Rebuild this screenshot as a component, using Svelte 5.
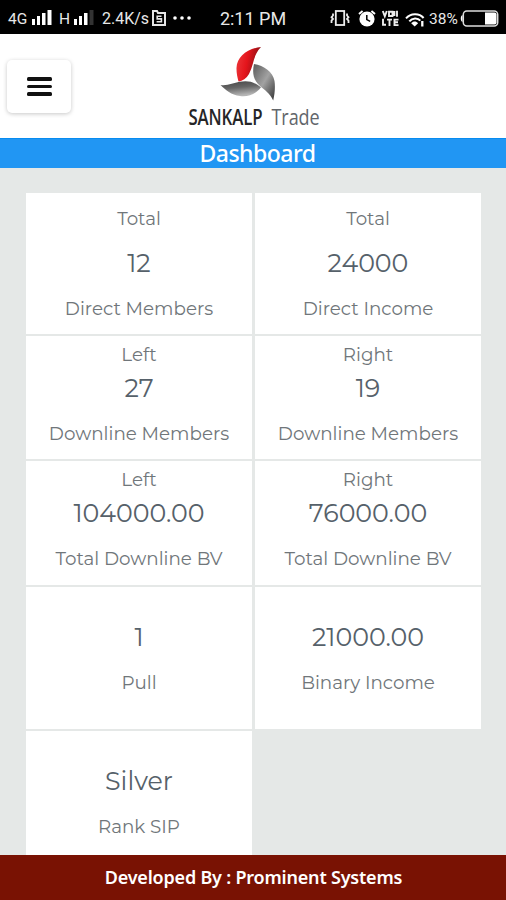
<script>
	const cards = [
		{ size: 'tall', top: 'Total', value: '12', label: 'Direct Members' },
		{ size: 'tall', top: 'Total', value: '24000', label: 'Direct Income' },
		{ size: 'short', top: 'Left', value: '27', label: 'Downline Members' },
		{ size: 'short', top: 'Right', value: '19', label: 'Downline Members' },
		{ size: 'short', top: 'Left', value: '104000.00', label: 'Total Downline BV' },
		{ size: 'short', top: 'Right', value: '76000.00', label: 'Total Downline BV' },
		{ size: 'plain', value: '1', label: 'Pull' },
		{ size: 'plain', value: '21000.00', label: 'Binary Income' },
		{ size: 'plain', value: 'Silver', label: 'Rank SIP' }
	];
</script>

{#snippet signal(weak)}
	<svg class="signal" width="22" height="16" viewBox="0 0 22 16" fill="#fff">
		<rect x="0" y="10" width="3" height="6" />
		<rect x="5" y="7" width="3" height="9" />
		<rect x="10" y="4" width="3.5" height="12" />
		<rect x="15.5" y="1" width="4" height="15" opacity={weak ? 0.2 : 1} />
	</svg>
{/snippet}

<div class="screen">
	<div class="status">
		<div class="left">
			<span class="net">4G</span>
			{@render signal(false)}
			<span class="net h">H</span>
			{@render signal(true)}
			<span class="speed">2.4K/s</span>
			<svg class="s-icon" width="14" height="16" viewBox="0 0 14 16" fill="none" stroke="#e5e5e5">
				<path d="M1 1h4l1 2h7v12H1z" stroke-width="2" />
				<path d="M9.5 6.2H5.2v2.7h4.2v2.9H4.6" stroke-width="1.6" />
			</svg>
			<svg width="18" height="16" viewBox="0 0 18 16" fill="#fff">
				<circle cx="2" cy="8" r="1.8" />
				<circle cx="9" cy="8" r="1.8" />
				<circle cx="16" cy="8" r="1.8" />
			</svg>
		</div>
		<div class="time">2:11 PM</div>
		<div class="right">
			<svg width="20" height="16" viewBox="0 0 20 16" fill="none" stroke="#eee" stroke-width="1.8">
				<rect x="5.8" y="1" width="8.4" height="14" />
				<path d="M3 3.5v2l-1.5 1.7L3 9l-1.5 1.5V13M17 3.5v2l1.5 1.7L17 9l1.5 1.5V13" />
			</svg>
			<svg class="alarm" width="18" height="17" viewBox="0 0 18 17">
				<circle cx="9" cy="9" r="7.6" fill="#fff" />
				<path d="M1 4l3.6-3M17 4l-3.6-3" stroke="#fff" stroke-width="2" />
				<path d="M8.8 5v4.6l3.4 1.7" fill="none" stroke="#000" stroke-width="1.5" />
			</svg>
			<svg class="volte" width="17" height="16" viewBox="0 0 17 16" fill="none" stroke="#eee" stroke-width="1.9">
				<path d="M.8 1l2 5.3 2-5.3M7 1.7h3.5V6H7zM15 .7v6M12.4 1v5M1 8.8v6h3M5 9.6h5M7.5 9.6V16M16.5 9.6h-4v5.5h4M12.5 12.3h3.5" />
			</svg>
			<svg class="wifi" width="20" height="14" viewBox="0 0 20 14" fill="none" stroke="#fff" stroke-width="2">
				<path d="M1 5.3C5.6.2 14-.3 18.6 5" />
				<path d="M4.3 8.3c3-3.7 8.5-3.8 11-.6" />
				<path d="M6.2 10.3c2-2.4 5-2.4 6.9 0l-3.4 3.3z" fill="#fff" stroke="none" />
				<path d="M17.3 8v5.5" stroke-width="2.3" />
			</svg>
			<span class="percent">38%</span>
			<svg width="39" height="17" viewBox="0 0 39 17">
				<rect x="3.3" y="1" width="34.4" height="15" rx="3.5" fill="none" stroke="#ddd" stroke-width="1.5" />
				<path d="M2.5 5C.2 5.4.2 11.6 2.5 12" fill="#fff" />
				<path d="M25 2.5h9.5q2 0 2 2v8q0 2-2 2H25z" fill="#fff" />
			</svg>
		</div>
	</div>

	<header>
		<button class="menu" aria-label="Menu">
			<span></span>
			<span></span>
			<span></span>
		</button>
		<svg class="logo" width="150" height="100" viewBox="0 0 150 100">
			<defs>
				<linearGradient id="red" x1="0" y1="0" x2="1" y2="0.25">
					<stop offset="0" stop-color="#ee3b3e" />
					<stop offset="0.5" stop-color="#e4141b" />
					<stop offset="1" stop-color="#861116" />
				</linearGradient>
				<linearGradient id="grey" x1="0" y1="0" x2="1" y2="1">
					<stop offset="0" stop-color="#5b5b5b" />
					<stop offset="0.5" stop-color="#a2a2a2" />
					<stop offset="1" stop-color="#333" />
				</linearGradient>
				<linearGradient id="dark" x1="0" y1="0" x2="0.3" y2="1">
					<stop offset="0" stop-color="#444" />
					<stop offset="0.5" stop-color="#666" />
					<stop offset="1" stop-color="#b5b5b5" />
				</linearGradient>
			</defs>
			<path d="M81 11C67 12.5 57 21 56.5 32c-.1 5 .8 9 2 13.5 4-.6 8-3 10.500-7.500C74 29 72.500 20 81 11z" fill="url(#red)" />
			<path d="M74 28c10 1.500 19 8 20.500 17 .9 6 .2 13-1.300 19.500C90 57 84.500 54 79.500 49.500 73.500 44 72 37 74 28z" fill="url(#grey)" />
			<path d="M40.500 49c7 1 13-2 19-3.200 8-1.300 14-.5 21.500 5.500-5 7-13 9.700-21 8.700C51 58.800 46 54.500 40.500 49z" fill="url(#dark)" />
			<text class="brand" transform="translate(8.5 89) scale(0.8 1)" textLength="92.5">SANKALP</text>
			<text class="trade" transform="translate(91.5 89) scale(0.86 1)" textLength="56">Trade</text>
		</svg>
	</header>

	<h1>Dashboard</h1>

	<main>
		{#each cards as card}
			<div class="card {card.size}">
				{#if card.top}
					<div class="label">{card.top}</div>
				{/if}
				<div class="value">{card.value}</div>
				<div class="label">{card.label}</div>
			</div>
		{/each}
	</main>

	<footer>Developed By : Prominent Systems</footer>
</div>

<style>
	:global(body) {
		margin: 0;
	}

	.screen {
		display: flex;
		flex-direction: column;
		width: 506px;
		height: 900px;
		overflow: hidden;
		background: #e5e8e7;
		font-family: Montserrat, Inter, sans-serif;
	}

	.status {
		display: grid;
		grid-template-columns: 213px 80px 1fr;
		align-items: center;
		height: 34px;
		flex: none;
		background: #000;
		color: #e8e8e8;
		font-family: Roboto, sans-serif;
		white-space: nowrap;
	}

	.status svg {
		flex: none;
	}

	.left,
	.right {
		display: flex;
		align-items: center;
		padding-top: 2px;
	}

	.left {
		padding-left: 8px;
	}

	.net {
		width: 24px;
		font-size: 15.5px;
		line-height: 16px;
		padding-top: 2px;
	}

	.net.h {
		width: 14px;
		margin-left: 5px;
		margin-right: 1px;
	}

	.signal {
		margin-top: -2px;
	}

	.speed {
		width: 45px;
		margin-left: 6px;
		font-size: 16px;
	}

	.s-icon {
		margin: 0 7px 0 5px;
	}

	.time {
		font-size: 18px;
		padding-top: 2px;
		text-align: center;
	}

	.right {
		padding-left: 37px;
	}

	.alarm {
		margin-left: 8px;
	}

	.volte {
		margin-left: 6px;
	}

	.wifi {
		margin: 3px 4px 0 6px;
	}

	.percent {
		width: 31px;
		font-size: 15.5px;
		padding-top: 1px;
	}

	header {
		display: flex;
		align-items: flex-start;
		flex: none;
		height: 104px;
		background: #fff;
	}

	.menu {
		display: flex;
		flex-direction: column;
		align-items: center;
		justify-content: center;
		gap: 4px;
		width: 64px;
		height: 53px;
		margin: 26px 0 0 7px;
		padding: 0;
		border: 0;
		border-radius: 5px;
		background: #fff;
		box-shadow: 0 1px 4px rgba(0, 0, 0, 0.22);
	}

	.menu span {
		width: 25px;
		height: 3.5px;
		border-radius: 1.5px;
		background: #111;
	}

	.logo {
		margin: 2px 0 0 109px;
	}

	.brand,
	.trade {
		font-family: 'Open Sans', sans-serif;
		font-size: 21px;
		font-weight: 600;
		fill: #252527;
	}

	.trade {
		font-weight: 400;
		fill: #62666b;
	}

	h1 {
		flex: none;
		height: 30px;
		margin: 0;
		background: #2196f3;
		border-top: 1px solid #078bf0;
		box-sizing: border-box;
		color: #fff;
		font: 500 23px/28px 'Noto Sans', 'Open Sans', sans-serif;
		letter-spacing: -0.5px;
		text-align: center;
		padding-left: 9px;
	}

	main {
		display: grid;
		grid-template-columns: 1fr 1fr;
		grid-template-rows: 141px 123px 124px 142px 142px;
		gap: 2px 3px;
		flex: 1;
		min-height: 0;
		padding: 25px 25px 0 26px;
		overflow: hidden;
	}

	.card {
		background: #fff;
		text-align: center;
		white-space: nowrap;
		box-sizing: border-box;
	}

	.tall {
		padding-top: 14px;
	}

	.short {
		padding-top: 7px;
	}

	.plain {
		padding-top: 38px;
	}

	.label {
		color: #70767a;
		font-size: 18.3px;
		font-weight: 400;
		line-height: 24px;
	}

	.value {
		margin-bottom: 22px;
		color: #56616a;
		font-size: 25.3px;
		font-weight: 400;
		line-height: 24px;
	}

	.tall .value {
		margin-top: 20px;
	}

	.short .value {
		margin-top: 9px;
	}

	footer {
		flex: none;
		height: 45px;
		background: #791203;
		color: #fff;
		font: 600 18px/44px 'Noto Sans', 'Open Sans', sans-serif;
		letter-spacing: -0.2px;
		text-align: center;
		padding-left: 1px;
	}
</style>
